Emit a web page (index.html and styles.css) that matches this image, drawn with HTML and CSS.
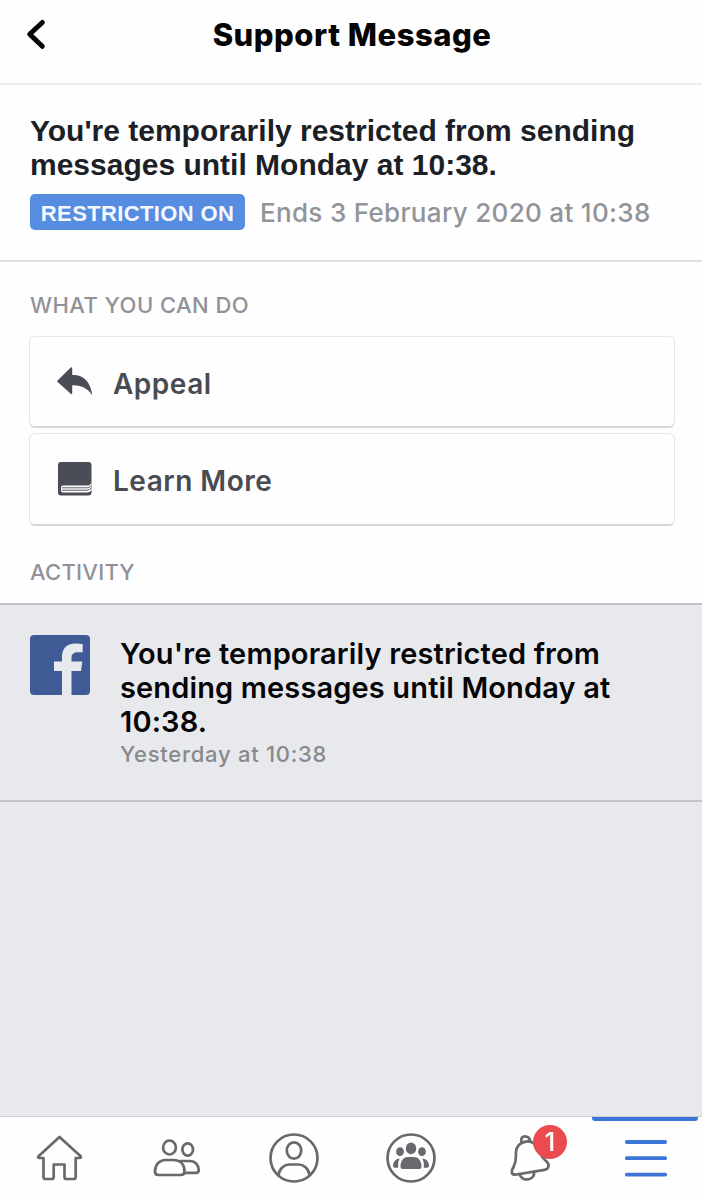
FILE: index.html
```html
<!DOCTYPE html>
<html lang="en">
<head>
<meta charset="utf-8">
<title>Support Message</title>
<link rel="stylesheet" href="styles.css">
</head>
<body>
<div class="screen">
  <header class="header">
    <svg class="back" viewBox="0 0 24 32"><path d="M20.300 4.500 7.700 16.300 20.300 28.300" fill="none" stroke="#050505" stroke-width="5" stroke-linecap="round" stroke-linejoin="round"/></svg>
    <h1 class="title">Support Message</h1>
  </header>
  <section class="notice">
    <h2 class="notice-title">You're temporarily restricted from sending<br>messages until Monday at 10:38.</h2>
    <div class="status">
      <span class="tag">RESTRICTION ON</span>
      <span class="ends">Ends 3 February 2020 at 10:38</span>
    </div>
  </section>
  <section class="actions">
    <h3 class="label label-actions">WHAT YOU CAN DO</h3>
    <a class="card">
      <svg class="card-icon" viewBox="0 0 38 38"><path d="M1.6 17.4 14.5 4.7Q16.2 3.4 16.2 5.6V12.1C27 11.5 35 19 36.2 32.3 31.7 25.4 25 22 16.2 22.4V29.8Q16.2 32 14.5 30.6L1.6 19Q.8 18.2 1.6 17.4Z" fill="#4b4d56"/></svg>
      <span>Appeal</span>
    </a>
    <a class="card">
      <svg class="card-icon" viewBox="0 0 38 38"><path d="M5 2H32.500Q35.500 2 35.500 5V32.500Q35.500 35.500 32.500 35.500H5Q2 35.500 2 32.500V5Q2 2 5 2Z" fill="#4b4d56"/><path d="M35.500 22.500C34.500 25 33 25.500 31 25.500H7Q5 25.500 5 27.500V30.500Q5 32.500 7 32.500H31Q34 32.500 35.500 30Z" fill="#fff"/><path d="M6 27.800H31Q34 27.600 35.500 25.300M6 30.200H31Q34 30 35.500 27.700" fill="none" stroke="#4b4d56" stroke-width=".9"/></svg>
      <span>Learn More</span>
    </a>
    <h3 class="label label-activity">ACTIVITY</h3>
  </section>
  <section class="activity">
    <svg class="logo" viewBox="0 0 60 60"><rect width="60" height="60" rx="4" fill="#405a96"/><path d="M32 60V36H24V26.500H32V22C32 13.500 37 8.500 45 8.500Q49 8.500 52.700 9V17.200H48C43.500 17.200 41.500 19 41.500 23V26.500H52.300L51 36H41.500V60Z" fill="#e8e9ed"/></svg>
    <div>
      <p class="activity-text">You're temporarily restricted from<br>sending messages until Monday at<br>10:38.</p>
      <p class="time">Yesterday at 10:38</p>
    </div>
  </section>
  <div class="rest"></div>
  <nav class="tabs">
    <a class="tab"><svg viewBox="0 0 60 60"><path d="M30.500 7 51.700 26.200Q52.500 28 50.500 28H46.700V47Q46.700 49 44.700 49H37.500Q35.500 49 35.500 47V34.500H24.700V47Q24.700 49 22.700 49H16.500Q14.500 49 14.500 47V28H10.500Q8.500 28 9.500 26.200Z"/></svg></a>
    <a class="tab"><svg viewBox=".5 .5 60 60"><ellipse cx="24" cy="18" rx="6.400" ry="7"/><ellipse cx="42.200" cy="20" rx="5.300" ry="6.200"/><path d="M13 45.500H35Q39 45.500 39 42C39 34 34 30.500 28 30.500H20C14 30.500 9.500 35 9.500 42Q9.500 45.500 13 45.500Z"/><path d="M35 31.500H44C50 31.500 53.300 36 53.300 40.500Q53.300 43.300 50.500 43.300H39"/></svg></a>
    <a class="tab"><svg viewBox=".5 0 60 60"><circle cx="31.500" cy="28" r="23.500"/><ellipse cx="31.500" cy="20.500" rx="7.200" ry="8.200"/><path d="M15.700 45.500C17 38 22 34.500 27 34.500H36C41 34.500 46 38 47.300 45.500"/></svg></a>
    <a class="tab"><svg viewBox="0 0 60 60"><circle cx="31" cy="28" r="23.500"/><g class="solid"><ellipse cx="31" cy="18.400" rx="5.200" ry="5.900"/><ellipse cx="20" cy="21.700" rx="3.900" ry="4.400"/><ellipse cx="42" cy="21.700" rx="3.900" ry="4.400"/><path d="M20.500 37C20.500 30 24 27 28 27H34C38 27 41.500 30 41.500 37Q41.500 39 39.500 39H22.500Q20.500 39 20.500 37ZM19.500 28.500Q13 29.500 13 36 13 37.800 15 37.800H18.200Q17.600 32.500 19.500 28.500ZM42.500 28.500Q49 29.500 49 36 49 37.800 47 37.800H43.800Q44.400 32.500 42.500 28.500Z"/></g></svg></a>
    <a class="tab"><svg viewBox="-6 0 60 60"><path d="M13.500 44.500 41.500 39.800C46 39 47 34.500 43.500 31.500 38 27 37.500 25 35 19.500 32.500 13.500 28 10.500 22.500 11.600 16.500 12.800 13.500 16 13 22 12.500 28.500 14 30.500 10.500 37 7.500 42 8.500 45.300 13.500 44.500Z"/><path d="M18.500 12C17.500 8 19.500 6.300 22 6.300 24.500 6.300 27 8 27 11.500M16.500 44.200C18 48 21.500 50 25.500 49.300 29.500 48.500 31.500 45.500 31 41.800"/></svg><span class="badge">1</span></a>
    <a class="tab active"><svg viewBox="0 0 60 60"><path d="M12.800 12H51.200M12.800 28.200H51.200M12.800 44.600H51.200"/></svg></a>
  </nav>
</div>
</body>
</html>
```
FILE: styles.css
```css
* { box-sizing: border-box; }
body { margin: 0; background: #fff; font-family: Inter, "Liberation Sans", sans-serif; font-weight: 600; }
h1, h2, h3, p { margin: 0; font-weight: inherit; }
svg { display: block; }
span, p, h1, h2, h3 { white-space: nowrap; }
.screen { width: 702px; height: 1200px; display: flex; flex-direction: column; background: #fefefe; overflow: hidden; }

.header { height: 85px; flex: none; display: grid; grid-template-columns: 60px 1fr 60px; align-items: start; padding: 18px 0 0; border-bottom: 2px solid #ececee; }
.back { width: 24px; height: 32px; margin-left: 22px; }
.title { font-size: 31px; line-height: 34px; font-weight: 800; text-align: center; color: #050505; letter-spacing: .5px; padding-left: 2px; }

.notice { height: 177px; flex: none; padding: 29px 30px 0; border-bottom: 2px solid #dedfe0; }
.notice-title { font-family: "Liberation Sans", Arial, sans-serif; font-weight: 700; font-size: 30px; line-height: 34px; color: #1d1f27; }
.status { display: flex; align-items: flex-start; gap: 15px; margin-top: 12px; }
.tag { width: 215px; height: 36px; border-radius: 5px; background: #568de0; color: #f5f8fd; font-family: "Liberation Sans", Arial, sans-serif; font-weight: 700; font-size: 22px; line-height: 39px; letter-spacing: .36px; text-align: center; }
.ends { font-size: 26px; line-height: 36px; color: #919499; font-weight: 500; letter-spacing: .32px; padding-top: 1px; }

.actions { height: 341px; flex: none; padding: 28px 27px 0 29px; }
.label { font-size: 22px; line-height: 30px; font-weight: 500; color: #919297; padding-left: 1px; letter-spacing: .45px; }
.label-actions { margin-bottom: 16px; }
.card { height: 92px; margin-bottom: 5px; padding-left: 26px; display: flex; align-items: center; gap: 19px; border: 1px solid #e5e6e7; border-bottom: 2px solid #d5d6d7; border-radius: 6px; font-size: 28px; line-height: 34px; letter-spacing: .5px; color: #494b52; }
.card + .card { height: 93px; }
.card span { padding-top: 4px; }
.card-icon { width: 38px; height: 38px; }
.label-activity { margin-top: 31px; letter-spacing: .25px; }

.activity { height: 199px; flex: none; display: flex; gap: 30px; padding: 30px 30px 0; background: #e8e9ed; border-top: 2px solid #c3c4c9; border-bottom: 2px solid #c3c4c9; }
.logo { width: 60px; height: 60px; flex: none; }
.activity-text { font-size: 29px; line-height: 34px; letter-spacing: .14px; color: #060608; padding-top: 2px; }
.time { font-size: 22px; line-height: 30px; font-weight: 500; letter-spacing: .72px; color: #88898c; }
.rest { flex: 1; background: #e8e9ed; }

.tabs { height: 84px; flex: none; display: grid; grid-template-columns: repeat(6, 117px); border-top: 1px solid #cdced1; }
.tab { position: relative; display: flex; justify-content: center; padding-top: 13px; }
.tab svg { width: 60px; height: 60px; fill: none; stroke: #67696c; stroke-width: 2.700; stroke-linecap: round; stroke-linejoin: round; }
.tab .solid { fill: #67696c; stroke: none; }
.badge { position: absolute; left: 65px; top: 8px; width: 34px; height: 34px; border-radius: 50%; background: #eb4b4e; color: #fff; font-size: 25px; font-weight: 500; line-height: 34px; text-align: center; }
.active::before { content: ""; position: absolute; left: 7px; top: 0; width: 106px; height: 4px; background: #3d75d8; border-radius: 0 0 3px 3px; }
.active svg { stroke: #3d75d8; stroke-width: 3.800; }
```
